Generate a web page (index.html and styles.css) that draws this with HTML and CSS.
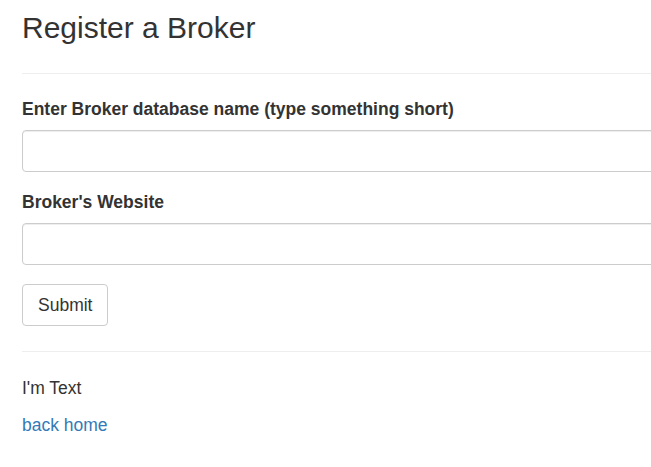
FILE: index.html
```html
<!DOCTYPE html>
<html>
<head>
<meta charset="utf-8">
<link rel="stylesheet" href="styles.css">
</head>
<body>
<div class="page">
  <h2 class="title">Register a Broker</h2>
  <hr class="rule rule-top">
  <form class="form">
    <div class="group">
      <label class="label">Enter Broker database name (type something short)</label>
      <input class="input" type="text">
    </div>
    <div class="group">
      <label class="label">Broker's Website</label>
      <input class="input" type="text">
    </div>
    <button class="btn" type="button">Submit</button>
  </form>
  <hr class="rule rule-bottom">
  <p class="text">I'm Text</p>
  <a class="link" href="#">back home</a>
</div>
</body>
</html>
```

FILE: styles.css
```css
html, body {
  margin: 0;
  padding: 0;
  overflow: hidden;
  background: #fff;
}
body {
  font-family: "Liberation Sans", Arial, sans-serif;
  font-size: 17.5px;
  line-height: 25px;
  color: #333;
}
.page {
  width: 800px;
  padding-left: 22px;
}
.title {
  font-size: 30px;
  font-weight: 400;
  line-height: 33px;
  margin: 11px 0 0;
}
.rule {
  border: 0;
  border-top: 1px solid #eee;
  margin: 0;
}
.rule-top {
  margin-top: 29px;
}
.form {
  margin-top: 23px;
  display: flex;
  flex-direction: column;
  align-items: flex-start;
}
.group {
  display: flex;
  flex-direction: column;
  width: 100%;
  margin-bottom: 18px;
}
.label {
  font-weight: 700;
  display: block;
  margin-bottom: 8px;
}
.input {
  box-sizing: border-box;
  height: 42px;
  width: 100%;
  border: 1px solid #ccc;
  border-radius: 4px;
  box-shadow: inset 0 1px 1px rgba(0,0,0,.075);
  padding: 6px 12px;
  font: inherit;
  background: #fff;
}
.btn {
  box-sizing: border-box;
  height: 42px;
  margin-top: 1px;
  padding: 8px 15px;
  font: inherit;
  line-height: 24px;
  color: #333;
  background: #fff;
  border: 1px solid #ccc;
  border-radius: 4px;
}
.rule-bottom {
  margin-top: 25px;
}
.text {
  margin: 24px 0 12px;
}
.link {
  color: #337ab7;
  text-decoration: none;
}
```
